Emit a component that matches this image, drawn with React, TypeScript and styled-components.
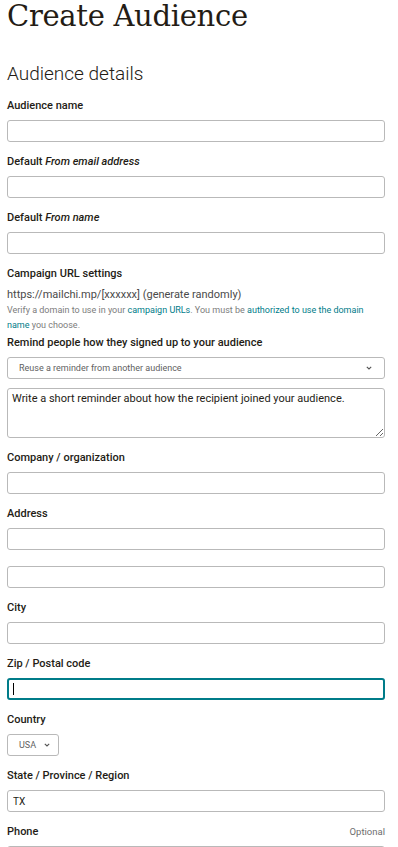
import React from 'react';
import styled, { createGlobalStyle } from 'styled-components';

const GlobalStyle = createGlobalStyle`
    html, body {
        margin: 0;
        padding: 0;
        background: #ffffff;
    }
    body {
        font-family: Roboto, "Liberation Sans", Arial, sans-serif;
        color: #241c15;
    }
`;

const Page = styled.div`
    width: 378px;
    padding: 0 13px 0 7px;
`;

const Title = styled.h1`
    margin: 0;
    font-family: "DejaVu Serif", "Liberation Serif", serif;
    font-weight: 400;
    font-size: 29px;
    line-height: 32px;
    letter-spacing: -0.3px;
    color: #241c15;
`;

const SectionTitle = styled.h2`
    margin: 30px 0 13px;
    font-size: 19px;
    font-weight: 300;
    line-height: 24px;
    color: #241c15;
`;

const Field = styled.div`
    margin-bottom: 13px;
`;

const LabelRow = styled.div`
    display: flex;
    justify-content: space-between;
    align-items: center;
    height: 14px;
    margin-bottom: 7px;
`;

const Label = styled.label`
    font-size: 11px;
    font-weight: 500;
    line-height: 14px;
    color: #241c15;

    em {
        font-style: italic;
    }
`;

const Optional = styled.span`
    font-size: 9.5px;
    line-height: 14px;
    color: #6e6e6e;
`;

const InputWrap = styled.div`
    position: relative;
`;

const Caret = styled.span`
    position: absolute;
    left: 6px;
    top: 5px;
    width: 1px;
    height: 12px;
    background: #000;
`;

const TextInput = styled.input<{ $focused?: boolean }>`
    display: block;
    box-sizing: border-box;
    width: 100%;
    height: 22px;
    margin: 0;
    padding: 0 ${(p) => (p.$focused ? '4px' : '5px')};
    border: ${(p) => (p.$focused ? '2px solid #007c89' : '1px solid #b9b9b9')};
    border-radius: 3px;
    font-family: inherit;
    font-size: 10px;
    color: #241c15;
    background: #fff;
    outline: none;
    caret-color: transparent;
`;

const SelectBox = styled.div<{ $compact?: boolean }>`
    box-sizing: border-box;
    display: flex;
    align-items: center;
    justify-content: ${(p) => (p.$compact ? 'flex-start' : 'space-between')};
    gap: 8px;
    width: ${(p) => (p.$compact ? '52px' : '100%')};
    height: 22px;
    padding: 0 ${(p) => (p.$compact ? '0' : '12px')} 0 11px;
    border: 1px solid #b9b9b9;
    border-radius: 3px;
    font-size: 9px;
    color: #5f5f5f;
`;

const Chevron = styled.svg`
    flex: none;
    width: 6px;
    height: 4px;
`;

const TextArea = styled.textarea`
    display: block;
    box-sizing: border-box;
    width: 100%;
    height: 50px;
    margin: 9px 0 0;
    padding: 3px 4px;
    border: 1px solid #b9b9b9;
    border-radius: 3px;
    font-family: inherit;
    font-size: 11px;
    line-height: 14px;
    color: #241c15;
    resize: vertical;
    outline: none;
`;

const UrlText = styled.div`
    font-size: 11px;
    line-height: 14px;
    color: #4a4a4a;
`;

const HelpText = styled.p`
    margin: 1px 0 3px;
    font-size: 9px;
    line-height: 15px;
    color: #7c7c7c;
`;

const HelpLink = styled.span`
    color: #007c89;
`;

const Stack = styled.div`
    display: flex;
    flex-direction: column;
    gap: 16px;
`;

const ChevronIcon = () => (
    <Chevron viewBox="0 0 6 4">
        <path d="M0.8 0.8l2.2 2.2 2.2-2.2" fill="none" stroke="#555" strokeWidth="1.1" />
    </Chevron>
);

type TFieldProps = {
    label: React.ReactNode;
    optional?: boolean;
    children: React.ReactNode;
};

const FormField = ({ label, optional, children }: TFieldProps) => (
    <Field>
        <LabelRow>
            <Label>{label}</Label>
            {optional && <Optional>Optional</Optional>}
        </LabelRow>
        {children}
    </Field>
);

export default function App() {
    return (
        <Page>
            <GlobalStyle />
            <Title>Create Audience</Title>
            <SectionTitle>Audience details</SectionTitle>

            <FormField label="Audience name">
                <TextInput type="text" />
            </FormField>
            <FormField label={<>Default <em>From email address</em></>}>
                <TextInput type="text" />
            </FormField>
            <FormField label={<>Default <em>From name</em></>}>
                <TextInput type="text" />
            </FormField>

            <Field>
                <LabelRow>
                    <Label>Campaign URL settings</Label>
                </LabelRow>
                <UrlText>https://mailchi.mp/[xxxxxx] (generate randomly)</UrlText>
                <HelpText>
                    Verify a domain to use in your <HelpLink>campaign URLs</HelpLink>. You must be{' '}
                    <HelpLink>authorized to use the domain</HelpLink>{' '}
                    <HelpLink>name</HelpLink> you choose.
                </HelpText>
                <LabelRow>
                    <Label>Remind people how they signed up to your audience</Label>
                </LabelRow>
                <SelectBox>
                    <span>Reuse a reminder from another audience</span>
                    <ChevronIcon />
                </SelectBox>
                <TextArea defaultValue="Write a short reminder about how the recipient joined your audience." />
            </Field>

            <FormField label="Company / organization">
                <TextInput type="text" />
            </FormField>
            <FormField label="Address">
                <Stack>
                    <TextInput type="text" />
                    <TextInput type="text" />
                </Stack>
            </FormField>
            <FormField label="City">
                <TextInput type="text" />
            </FormField>
            <FormField label="Zip / Postal code">
                <InputWrap>
                    <TextInput type="text" $focused />
                    <Caret />
                </InputWrap>
            </FormField>
            <FormField label="Country">
                <SelectBox $compact>
                    <span>USA</span>
                    <ChevronIcon />
                </SelectBox>
            </FormField>
            <FormField label="State / Province / Region">
                <TextInput type="text" defaultValue="TX" />
            </FormField>
            <FormField label="Phone" optional>
                <TextInput type="text" />
            </FormField>
        </Page>
    );
}
